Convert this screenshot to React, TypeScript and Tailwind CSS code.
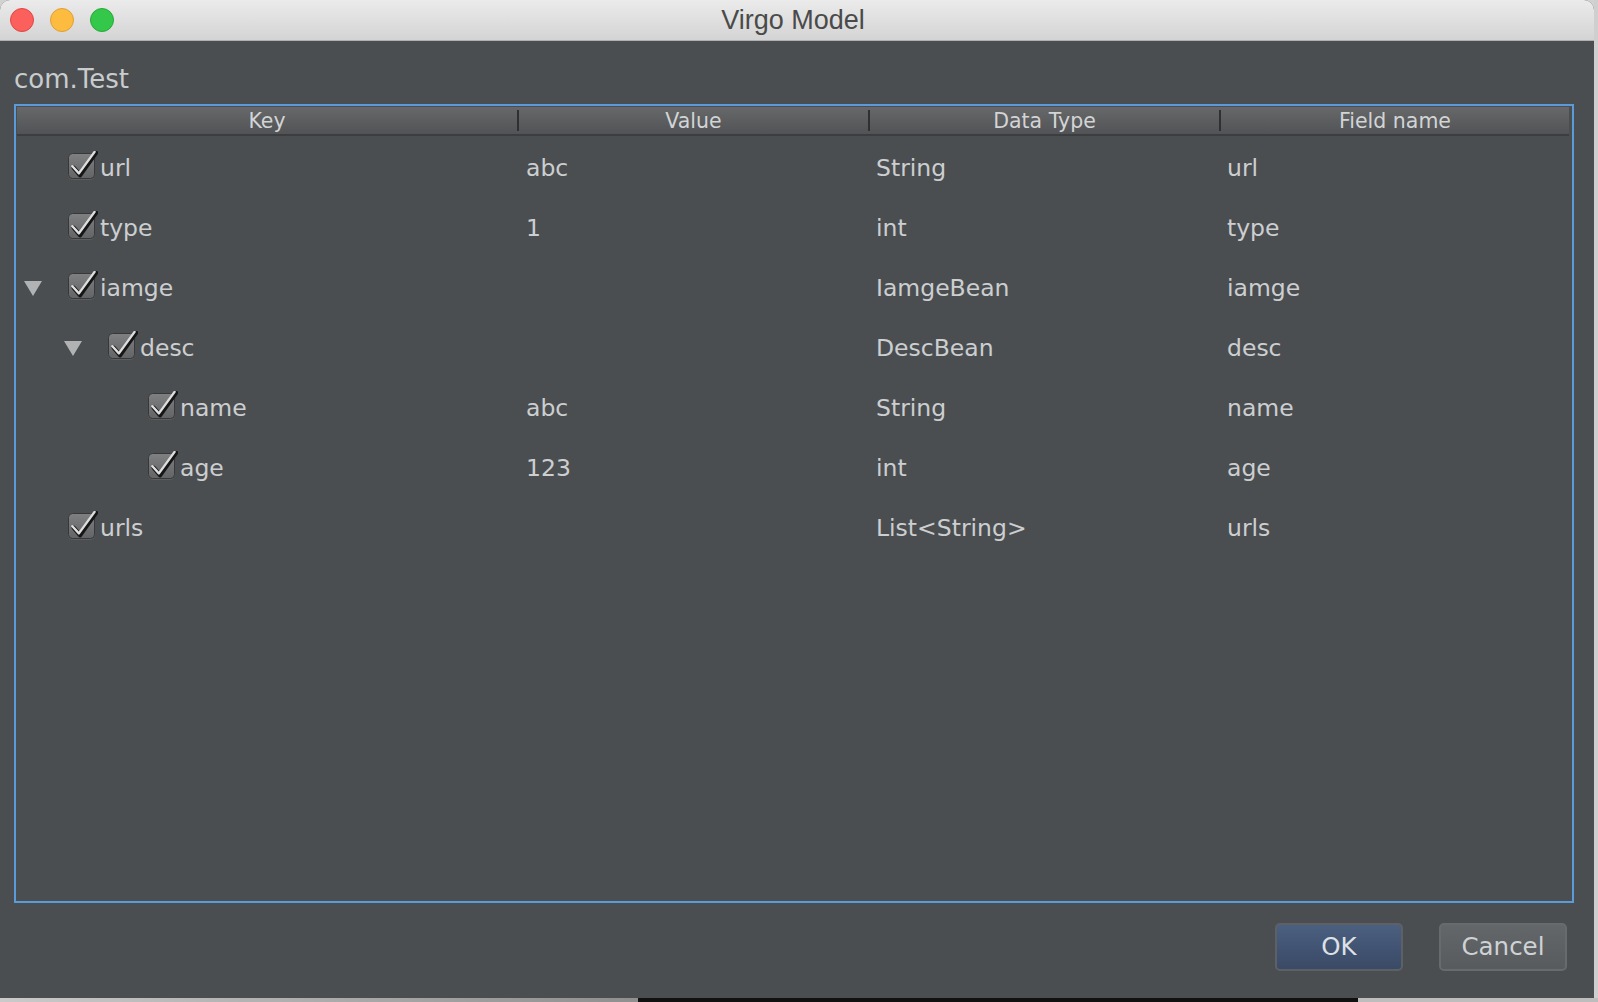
import React from "react";

type Row = {
  key: string;
  value: string;
  type: string;
  field: string;
  level: 0 | 1 | 2;
  open?: boolean;
};

const rows: Row[] = [
  { key: "url", value: "abc", type: "String", field: "url", level: 0 },
  { key: "type", value: "1", type: "int", field: "type", level: 0 },
  { key: "iamge", value: "", type: "IamgeBean", field: "iamge", level: 0, open: true },
  { key: "desc", value: "", type: "DescBean", field: "desc", level: 1, open: true },
  { key: "name", value: "abc", type: "String", field: "name", level: 2 },
  { key: "age", value: "123", type: "int", field: "age", level: 2 },
  { key: "urls", value: "", type: "List<String>", field: "urls", level: 0 },
];

const indent = ["pl-[7px]", "pl-[47px]", "pl-[87px]"];

const CheckBox: React.FC = () => (
  <svg width="32" height="32" viewBox="0 0 32 32" className="shrink-0">
    <defs>
      <linearGradient id="cbFill" x1="0" y1="0" x2="0" y2="1">
        <stop offset="0" stopColor="#7e8082" />
        <stop offset="1" stopColor="#626466" />
      </linearGradient>
    </defs>
    <rect x="2.5" y="3.5" width="26" height="25" rx="4" fill="none" stroke="#5c5e60" />
    <rect x="2.5" y="2.5" width="26" height="25" rx="4" fill="url(#cbFill)" stroke="#36383a" />
    <path
      d="M7.8 16.8 L14 24.2 L30 1.8"
      fill="none"
      stroke="#161616"
      strokeWidth="4.4"
      strokeLinecap="round"
      strokeLinejoin="round"
    />
    <path
      d="M6.4 15.2 L12.9 22.4 L28.6 0.9"
      fill="none"
      stroke="#dedede"
      strokeWidth="2.4"
      strokeLinecap="round"
      strokeLinejoin="round"
    />
  </svg>
);

const Triangle: React.FC = () => (
  <svg width="18" height="15" viewBox="0 0 18 15">
    <polygon points="0,0 18,0 9,15" fill="#b0b2b4" />
  </svg>
);

const columns = ["Key", "Value", "Data Type", "Field name"];

export default function App() {
  return (
    <div className="w-[1598px] h-[1002px] bg-[#d2d2d2] flex flex-col overflow-hidden">
      <div className="flex">
        <div className="w-[1594px] h-[998px] rounded-t-[10px] overflow-hidden flex flex-col bg-[#4b4e51]">
          {/* title bar */}
          <div className="h-[41px] shrink-0 bg-linear-to-b from-[#ebebeb] to-[#d4d4d4] border-b border-[#b1b1b1] flex items-center relative">
            <div className="flex items-center gap-[16px] pl-[10px]">
              <span className="w-[24px] h-[24px] rounded-full bg-[#fc605c] border border-[#df4744]" />
              <span className="w-[24px] h-[24px] rounded-full bg-[#fdbc40] border border-[#de9f34]" />
              <span className="w-[24px] h-[24px] rounded-full bg-[#34c84a] border border-[#27a83a]" />
            </div>
            <div className="absolute inset-0 flex items-center justify-center pointer-events-none">
              <span className="font-['Liberation_Sans',Arial,sans-serif] text-[27px] leading-[40px] text-[#4a4a4a] -translate-x-[4px]">
                Virgo Model
              </span>
            </div>
          </div>

          {/* body */}
          <div className="flex-1 flex flex-col pl-[14px] pr-[20px] pt-[23px] font-['DejaVu_Sans',Verdana,sans-serif]">
            <div className="h-[30px] leading-[30px] text-[26px] text-[#c9ccce]">com.Test</div>

            <div className="mt-[10px] h-[799px] border-2 border-[#5b9bd9] flex flex-col pt-px pl-px pr-[3px]">
              <div className="grid grid-cols-[500px_351px_351px_350px] h-[29px] shrink-0 bg-linear-to-b from-[#666869] to-[#515356] border-b-2 border-[#3b3d3f]">
                {columns.map((c, i) => (
                  <div key={c} className="flex items-center h-[27px]">
                    {i > 0 && <span className="w-[2px] h-[21px] bg-[#2e3032] shrink-0" />}
                    <span className="flex-1 text-center text-[20.5px] leading-[27px] pt-[2px] text-[#d2d4d6]">
                      {c}
                    </span>
                  </div>
                ))}
              </div>

              <div className="flex-1 flex flex-col">
                {rows.map((r) => (
                  <div
                    key={r.key}
                    className="grid grid-cols-[500px_351px_351px_350px] h-[60px] text-[23.5px] leading-[60px] text-[#ccced0]"
                  >
                    <div className={`flex items-center ${indent[r.level]}`}>
                      <div className="w-[42px] shrink-0 flex items-center pt-[2px]">
                        {r.open && <Triangle />}
                      </div>
                      <CheckBox />
                      <span className="ml-[2px] pt-[2px]">{r.key}</span>
                    </div>
                    <div className="pl-[9px] pt-[2px]">{r.value}</div>
                    <div className="pl-[8px] pt-[2px]">{r.type}</div>
                    <div className="pl-[8px] pt-[2px]">{r.field}</div>
                  </div>
                ))}
              </div>
            </div>

            <div className="mt-[20px] flex justify-end gap-[36px] pr-[7px]">
              <button className="w-[128px] h-[48px] rounded-[5px] border-2 border-[#5d6166] bg-linear-to-b from-[#4b5f80] to-[#3a4a66] text-[24.5px] text-[#dde1e6]">
                OK
              </button>
              <button className="w-[128px] h-[48px] rounded-[5px] border-2 border-[#676b6e] bg-linear-to-b from-[#63676a] to-[#575b5e] text-[24.5px] text-[#cfd2d5]">
                Cancel
              </button>
            </div>
          </div>
        </div>
        <div className="flex-1 bg-[#cfcfcf]" />
      </div>
      <div className="flex h-[4px]">
        <div className="w-[638px] bg-linear-to-r from-[#cacaca] to-[#8f8f8f]" />
        <div className="w-[720px] bg-[#111111]" />
        <div className="flex-1 bg-[#bdbdbd]" />
      </div>
    </div>
  );
}
